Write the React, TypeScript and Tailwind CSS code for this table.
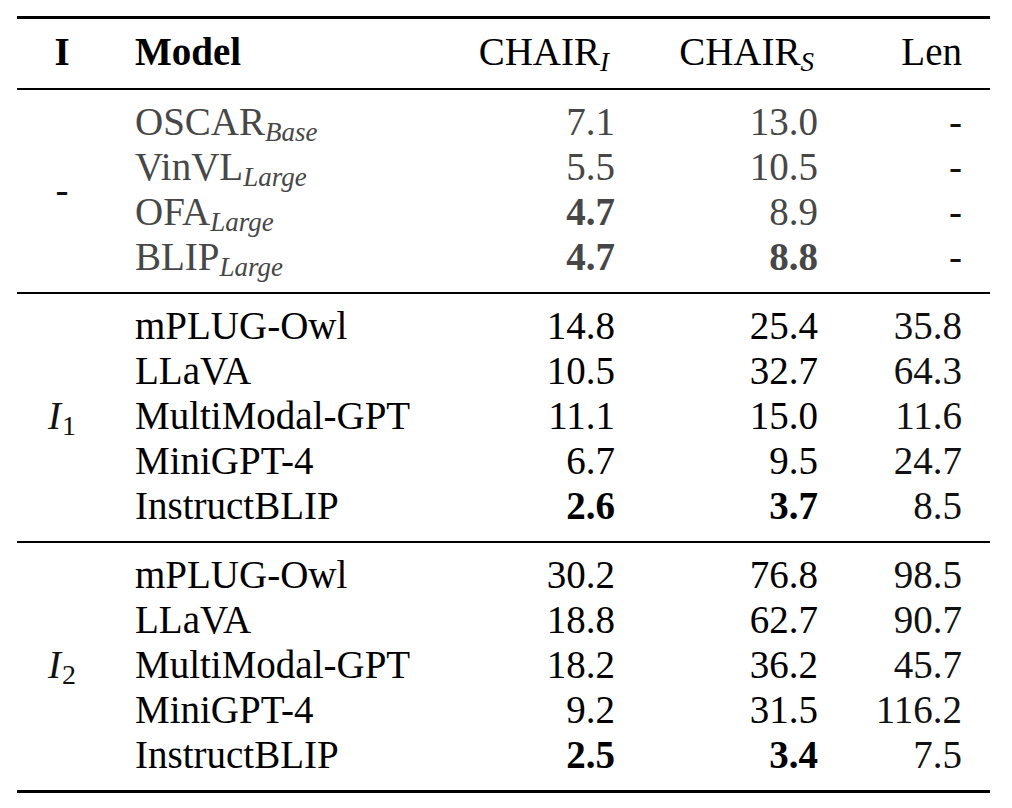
import React from 'react'

interface Row {
  model: string
  sub?: string
  ci: string
  cs: string
  len: string
  boldI?: boolean
  boldS?: boolean
}

interface Section {
  label: React.ReactNode
  muted?: boolean
  rows: Row[]
}

const SECTIONS: Section[] = [
  {
    label: '-',
    muted: true,
    rows: [
      { model: 'OSCAR', sub: 'Base', ci: '7.1', cs: '13.0', len: '-' },
      { model: 'VinVL', sub: 'Large', ci: '5.5', cs: '10.5', len: '-' },
      { model: 'OFA', sub: 'Large', ci: '4.7', cs: '8.9', len: '-', boldI: true },
      { model: 'BLIP', sub: 'Large', ci: '4.7', cs: '8.8', len: '-', boldI: true, boldS: true },
    ],
  },
  {
    label: <MathI n="1" />,
    rows: [
      { model: 'mPLUG-Owl', ci: '14.8', cs: '25.4', len: '35.8' },
      { model: 'LLaVA', ci: '10.5', cs: '32.7', len: '64.3' },
      { model: 'MultiModal-GPT', ci: '11.1', cs: '15.0', len: '11.6' },
      { model: 'MiniGPT-4', ci: '6.7', cs: '9.5', len: '24.7' },
      { model: 'InstructBLIP', ci: '2.6', cs: '3.7', len: '8.5', boldI: true, boldS: true },
    ],
  },
  {
    label: <MathI n="2" />,
    rows: [
      { model: 'mPLUG-Owl', ci: '30.2', cs: '76.8', len: '98.5' },
      { model: 'LLaVA', ci: '18.8', cs: '62.7', len: '90.7' },
      { model: 'MultiModal-GPT', ci: '18.2', cs: '36.2', len: '45.7' },
      { model: 'MiniGPT-4', ci: '9.2', cs: '31.5', len: '116.2' },
      { model: 'InstructBLIP', ci: '2.5', cs: '3.4', len: '7.5', boldI: true, boldS: true },
    ],
  },
]

function MathI({ n }: { n: string }) {
  return (
    <span>
      <span className="italic">I</span>
      <span className="text-[28px] leading-[0] align-[-6px] ml-[1px]">{n}</span>
    </span>
  )
}

// subscript that does not push the line box open
function Sub({ children }: { children: React.ReactNode }) {
  return <span className="italic text-[27px] leading-[0] align-[-6px]">{children}</span>
}

const COLS = 'grid grid-cols-[280px_200px_203px_144px]'

export default function App() {
  return (
    <div className="w-[1012px] h-[808px] bg-white pl-[17px] pr-[22px] pt-[16px] font-['Liberation_Serif','Times_New_Roman',serif] text-[39px] leading-[45px] text-black">
      <div className="h-[3px] bg-black" />

      {/* Header */}
      <div className="flex pt-[10px] pb-[14px]">
        <div className="w-[118px] pr-[28px] text-center font-bold">I</div>
        <div className={COLS}>
          <div className="font-bold">Model</div>
          <div className="text-right pr-[6px]">
            CHAIR<Sub>I</Sub>
          </div>
          <div className="text-right pr-[4px]">
            CHAIR<Sub>S</Sub>
          </div>
          <div className="text-right">Len</div>
        </div>
      </div>

      {SECTIONS.map((section, si) => (
        <div key={si}>
          <div className="h-[2px] bg-black" />
          <div className="flex pt-[9px] pb-[13px]">
            <div className="w-[118px] pr-[28px] flex items-center justify-center text-[#111]">
              {section.label}
            </div>
            <div className="flex flex-col">
              {section.rows.map((r, ri) => (
                <div key={ri} className={COLS}>
                  <div className={section.muted ? 'text-[#474747]' : ''}>
                    {r.model}
                    {r.sub && <Sub>{r.sub}</Sub>}
                  </div>
                  <div className={`text-right ${section.muted ? 'text-[#474747]' : ''} ${r.boldI ? 'font-bold' : ''}`}>
                    {r.ci}
                  </div>
                  <div className={`text-right ${section.muted ? 'text-[#474747]' : ''} ${r.boldS ? 'font-bold' : ''}`}>
                    {r.cs}
                  </div>
                  <div className="text-right text-[#111]">{r.len}</div>
                </div>
              ))}
            </div>
          </div>
        </div>
      ))}

      <div className="h-[3px] bg-black" />
    </div>
  )
}
